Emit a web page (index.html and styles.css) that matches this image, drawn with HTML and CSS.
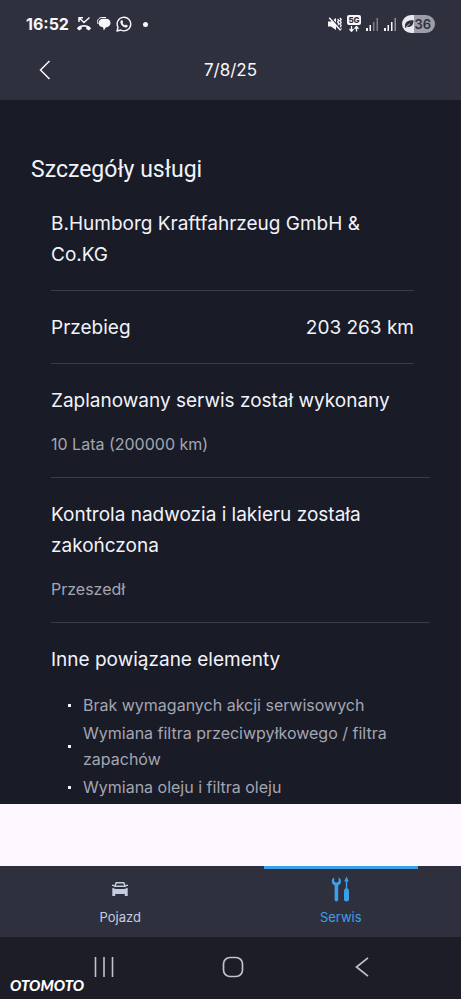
FILE: index.html
```html
<!DOCTYPE html>
<html lang="pl">
<head>
<meta charset="utf-8">
<meta name="viewport" content="width=device-width, initial-scale=1">
<title>Szczegóły usługi</title>
<link rel="stylesheet" href="styles.css">
</head>
<body>
<header class="top">
  <div class="status">
    <div class="status-left">
      <span class="clock">16:52</span>
      <svg width="16" height="16" viewBox="0 0 16 16" fill="none" stroke="currentColor">
        <path d="M3 6V1.800H7M3.300 2L8 6.500L13.500 1.500" stroke-width="1.500"/>
        <path d="M.8 12.200C4.500 8 11.500 8 15.200 12.200L13 14.600L10.300 13V11C9 10.500 7 10.500 5.700 11V13L3 14.600Z" fill="currentColor" stroke="none"/>
      </svg>
      <svg width="14" height="16" viewBox="0 0 14 16">
        <path d="M1 8C-.5 4 2 1.500 5 1.500H9" fill="none" stroke="currentColor" stroke-width="1"/>
        <path d="M6 2.800H9C12 2.800 13.700 4.800 13.500 7.200C13.300 9.600 11.500 11 9 11.200L6.800 14.500L6 11.200C3 11 1.600 9.300 1.600 7C1.600 4.500 3.500 2.800 6 2.800Z" fill="currentColor"/>
      </svg>
      <svg width="16" height="16" viewBox="0 0 16 16">
        <path d="M1 15L2 11.300A6.800 6.800 0 1 1 4.700 14Z" fill="none" stroke="currentColor" stroke-width="1.400" stroke-linejoin="round"/>
        <path d="M5.400 4.300L6.400 4.300L7.200 6.200L6.500 7.100C7.100 8.200 7.900 9 9 9.500L9.900 8.600L11.700 9.500C11.800 11 10.800 11.700 9.600 11.600C7 11.200 4.800 8.900 4.400 6.500C4.300 5.400 4.800 4.600 5.400 4.300Z" fill="currentColor"/>
      </svg>
      <span class="dot"></span>
    </div>
    <div class="status-right">
      <svg width="14" height="14" viewBox="0 0 14 14">
        <path d="M0 4.500H3L8 1V13L3 9.500H0Z" fill="currentColor"/>
        <path d="M9.600 2L10.800 3.500L9.600 5L10.800 6.500L9.600 8L10.800 9.500M12 1L13.200 2.500L12 4L13.200 5.500L12 7L13.200 8.500L12 10L13.200 11.500L12 13" fill="none" stroke="currentColor" stroke-width="1.300"/>
        <path d="M2.500 .5L13 12" stroke="#2f303e" stroke-width="1.200"/>
        <path d="M1.200 .8L12.500 13.300" stroke="currentColor" stroke-width="1.500"/>
      </svg>
      <svg class="network" width="14" height="18" viewBox="0 0 14 18">
        <rect width="14" height="10" rx="2" fill="currentColor"/>
        <text x="7" y="8" text-anchor="middle" class="network-label">5G</text>
        <path d="M4.500 11V16M2.500 14L4.500 16.300L6.500 14M9.500 16.500V11.500M7.500 13.700L9.500 11.500L11.500 13.700" fill="none" stroke="currentColor" stroke-width="1.300"/>
      </svg>
      <svg width="13" height="13" viewBox="0 0 13 13" fill="currentColor">
        <path d="M0 10H2V13H0ZM3.500 7H5V13H3.500Z"/><path d="M7 4H8.500V13H7ZM10.500 0H12V13H10.500Z" opacity=".4"/>
      </svg>
      <svg width="13" height="13" viewBox="0 0 13 13" fill="currentColor">
        <path d="M0 10H2V13H0ZM3.500 7H5V13H3.500ZM7 4H8.500V13H7Z"/><path d="M10.500 0H12V13H10.500Z" opacity=".5"/>
      </svg>
      <span class="battery">
        <svg width="10" height="12" viewBox="0 0 11 12"><path d="M1 9C1 4 4 2 10.500 2C10.500 7 8.500 10 3.500 9L1.500 10.500Z" fill="#2f303e"/><path d="M2.500 9L6.500 5.800" stroke="#e8e8ef" stroke-width=".8"/></svg>
        <span>36</span>
      </span>
    </div>
  </div>
  <nav class="bar">
    <button class="back" type="button" aria-label="Wstecz">
      <svg width="12" height="20" viewBox="0 0 12 20" fill="none" stroke="currentColor" stroke-width="1.500"><path d="M10.500 1L1.500 10L10.500 19"/></svg>
    </button>
    <span class="date">7/8/25</span>
  </nav>
</header>

<main class="details">
  <h1>Szczegóły usługi</h1>
  <section class="item inset">
    <h2>B.Humborg Kraftfahrzeug GmbH &amp; Co.KG</h2>
  </section>
  <section class="item inset mileage">
    <h2>Przebieg</h2>
    <span>203 263 km</span>
  </section>
  <section class="item">
    <h2>Zaplanowany serwis został wykonany</h2>
    <p>10 Lata (200000 km)</p>
  </section>
  <section class="item">
    <h2>Kontrola nadwozia i lakieru została zakończona</h2>
    <p>Przeszedł</p>
  </section>
  <section class="item last">
    <h2>Inne powiązane elementy</h2>
    <ul>
      <li>Brak wymaganych akcji serwisowych</li>
      <li>Wymiana filtra przeciwpyłkowego / filtra zapachów</li>
      <li>Wymiana oleju i filtra oleju</li>
    </ul>
  </section>
</main>

<nav class="tabs">
  <a class="tab" href="#pojazd">
    <svg width="18" height="28" viewBox="0 0 18 28">
      <path d="M4 11L5.200 7.700H12.800L14 11" fill="none" stroke="currentColor" stroke-width="1.400"/>
      <path d="M1 10.300H3.500M14.500 10.300H17" stroke="currentColor" stroke-width="1.200"/>
      <path d="M3.500 10.500H14.500L15.500 12H2.500Z" fill="currentColor"/>
      <path d="M1.300 12.800L4.500 14H13.500L16.700 12.800V21H13.800V19H4.200V21H1.300Z" fill="currentColor"/>
    </svg>
    <span>Pojazd</span>
  </a>
  <a class="tab active" href="#serwis" aria-current="page">
    <svg width="20" height="28" viewBox="0 0 20 28">
      <path d="M3.200 2.500C1.500 3.200 .8 4.600 .8 6.200C.8 8.300 2 9.800 3.600 10.400V24.500C3.600 27 7.200 27 7.200 24.500V10.400C8.800 9.800 10 8.300 10 6.200C10 4.600 9.300 3.200 7.600 2.500V6.400L5.400 7.800L3.200 6.400Z" fill="currentColor"/>
      <path d="M15.500 1.500L17.800 6.500H16.200V14H14.800V6.500H13.200Z" fill="currentColor"/>
      <path d="M14 13.500H17L18 15.500V24.500C18 27 13 27 13 24.500V15.500Z" fill="currentColor"/>
    </svg>
    <span>Serwis</span>
  </a>
</nav>

<footer class="system">
  <button type="button" aria-label="Ostatnie">
    <svg width="20" height="20" viewBox="0 0 20 20" stroke="currentColor" stroke-width="1.600"><path d="M1.500 0V20M10 0V20M18.500 0V20"/></svg>
  </button>
  <button type="button" aria-label="Ekran główny">
    <svg width="22" height="22" viewBox="0 0 22 22" fill="none" stroke="currentColor" stroke-width="1.700"><rect x="1.500" y="1.500" width="19" height="19" rx="6.500"/></svg>
  </button>
  <button type="button" aria-label="Wstecz">
    <svg width="14" height="20" viewBox="0 0 14 20" fill="none" stroke="currentColor" stroke-width="1.700"><path d="M13 .8L1.500 10L13 19.200"/></svg>
  </button>
  <span class="brand">OTOMOTO</span>
</footer>
</body>
</html>
```
FILE: styles.css
```css
* {
  box-sizing: border-box;
}

body {
  margin: 0;
  min-height: 100vh;
  display: flex;
  flex-direction: column;
  background: #fef7ff;
  color: #f1f3fb;
  font-family: Inter, "Noto Sans", sans-serif;
}

h1, h2, p, ul {
  margin: 0;
  padding: 0;
  font-weight: 400;
}

svg {
  display: block;
  flex: none;
}

button {
  display: flex;
  align-items: center;
  justify-content: center;
  padding: 0;
  border: 0;
  background: none;
  color: inherit;
}

.top {
  background: #2f303e;
  color: #f7f7fc;
}

.status {
  display: flex;
  align-items: center;
  justify-content: space-between;
  height: 48px;
  padding: 0 26px;
}

.status-left,
.status-right {
  display: flex;
  align-items: center;
  gap: 5px;
}

.clock {
  margin-right: 2px;
  font-size: 16px;
  font-weight: 700;
}

.dot {
  width: 5px;
  height: 5px;
  margin-left: 6px;
  border-radius: 50%;
  background: currentColor;
}

.network-label {
  font-size: 8px;
  font-weight: 800;
  fill: #2f303e;
}

.battery {
  display: flex;
  align-items: center;
  height: 18px;
  padding: 0 4px 0 2px;
  border-radius: 9px;
  background: linear-gradient(90deg, #e8e8ef 36%, #9c9da8 36%);
  color: #2f303e;
  font-size: 13px;
  font-weight: 600;
}

.bar {
  display: grid;
  grid-template-columns: 32px 1fr 32px;
  align-items: center;
  height: 52px;
  padding: 0 29px 8px;
}

.back {
  height: 32px;
}

.date {
  text-align: center;
  font-size: 17px;
}

.details {
  padding: 52px 31px 4px;
  background: #191b26;
}

h1 {
  font-family: Roboto, "Open Sans", sans-serif;
  font-size: 23px;
  line-height: 35px;
}

.item {
  margin-left: 20px;
  padding: 21px 0 20px;
  border-bottom: 1px solid #3a3c49;
}

.inset {
  margin-right: 16px;
}

.mileage {
  display: flex;
  justify-content: space-between;
}

.last {
  padding-bottom: 0;
  border-bottom: 0;
}

h2,
.mileage span {
  font-size: 19px;
  line-height: 31px;
}

.item p,
.item li {
  color: #a4a6b2;
  font-size: 16px;
  line-height: 26px;
}

.item p {
  margin-top: 15px;
}

.item ul {
  display: flex;
  flex-direction: column;
  gap: 2px;
  margin-top: 17px;
  list-style: none;
}

.item li {
  display: flex;
  align-items: center;
  gap: 12px;
  padding-left: 17px;
}

.item li::before {
  content: "";
  flex: none;
  width: 3px;
  height: 3px;
  background: #f1f3fb;
}

.tabs {
  display: grid;
  grid-template-columns: 1fr 1fr;
  margin-top: auto;
  padding: 0 10px;
  background: #2f303e;
}

.tab {
  position: relative;
  display: flex;
  flex-direction: column;
  align-items: center;
  gap: 4px;
  height: 71px;
  padding-top: 9px;
  color: #c5cce0;
  font-size: 13px;
  line-height: 20px;
  text-decoration: none;
}

.active {
  color: #3d9fe8;
}

.active::before {
  content: "";
  position: absolute;
  top: 0;
  left: 15%;
  right: 15%;
  height: 3px;
  background: currentColor;
}

.system {
  position: relative;
  display: grid;
  grid-template-columns: repeat(3, 1fr);
  height: 62px;
  padding: 0 35px 2px 39px;
  background: #1d1d27;
  color: #c2c2cb;
}

.brand {
  position: absolute;
  left: 10px;
  bottom: 6px;
  color: #fff;
  font-family: Lato, Inter, sans-serif;
  font-size: 15px;
  font-style: italic;
  font-weight: 900;
  line-height: 16px;
}
```
